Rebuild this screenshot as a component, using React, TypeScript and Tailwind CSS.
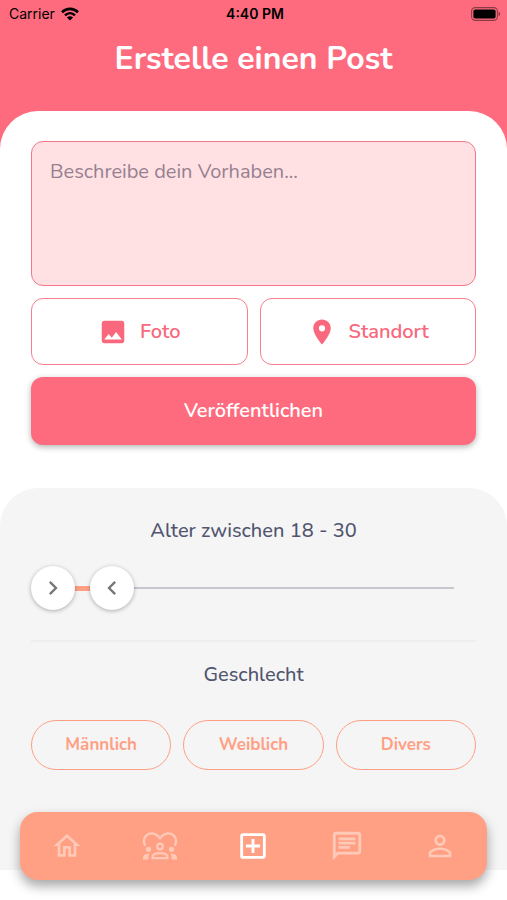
import React, { useState } from 'react';
import {
  MdChevronLeft,
  MdChevronRight,
  MdImage,
  MdOutlineAddBox,
  MdOutlineChat,
  MdOutlineHome,
  MdPersonOutline,
  MdPlace,
} from 'react-icons/md';

const MIN_AGE = 18;
const MAX_AGE = 100;

const genders = ['Männlich', 'Weiblich', 'Divers'];

function WifiIcon() {
  return (
    <svg viewBox="0 0 18 14" className="w-[18px] h-[14px]" aria-hidden="true">
      <g fill="none" stroke="currentColor" strokeWidth="2.6">
        <path d="M1 5.2C5.6.7 12.4.7 17 5.2" />
        <path d="M4 8.4c3-2.9 7-2.9 10 0" />
      </g>
      <path d="M9 13.6 5.9 10.6c1.8-1.7 4.4-1.7 6.2 0z" fill="currentColor" />
    </svg>
  );
}

function BatteryIcon() {
  return (
    <svg viewBox="0 0 30 14" className="w-[30px] h-[14px]" aria-hidden="true">
      <rect x="0.6" y="0.6" width="25.8" height="12.8" rx="3.6" fill="none" stroke="currentColor" strokeOpacity="0.45" strokeWidth="1.1" />
      <rect x="2.4" y="2.5" width="22.2" height="9" rx="1.8" fill="currentColor" />
      <path d="M27.6 4.8c2 .7 2 3.7 0 4.4z" fill="currentColor" fillOpacity="0.5" />
    </svg>
  );
}

function CommunityIcon() {
  return (
    <svg viewBox="0 0 36 30" className="w-9 h-[30px]" aria-hidden="true">
      <g fill="none" stroke="currentColor" strokeWidth="2.3">
        <path d="M3.2 14.8C.8 10.600 1.900 5.600 5.600 3.500 10 1.200 15 2.900 18 7.200c3-4.300 8-6 12.400-3.700 3.700 2.100 4.800 7.100 2.400 11.300" />
        <circle cx="18" cy="15.500" r="2.800" />
        <path d="M10.600 27.200v-1.200c0-2.500 3.600-3.800 7.400-3.800s7.400 1.300 7.400 3.800v1.200z" />
      </g>
      <g fill="currentColor">
        <circle cx="6.400" cy="18.300" r="2.600" />
        <circle cx="29.600" cy="18.300" r="2.600" />
        <path d="M1 28.400v-2c0-2.200 2.600-3.800 6.600-3.600-.8.900-1.200 2-1.200 3.200v2.400z" />
        <path d="M35 28.400v-2c0-2.200-2.600-3.800-6.600-3.600.8.900 1.200 2 1.200 3.200v2.400z" />
      </g>
    </svg>
  );
}

function AgeSlider({ range, onChange }: { range: [number, number]; onChange: (r: [number, number]) => void }) {
  const [from, to] = range;
  const pos = (age: number) => ((age - MIN_AGE) / (MAX_AGE - MIN_AGE)) * 100;
  const input =
    'absolute inset-0 w-full h-11 appearance-none bg-transparent opacity-0 pointer-events-none [&::-webkit-slider-thumb]:pointer-events-auto [&::-webkit-slider-thumb]:appearance-none [&::-webkit-slider-thumb]:size-11';
  const thumb =
    'absolute top-0 size-11 -translate-x-1/2 flex items-center justify-center rounded-full bg-white text-[#77777b] shadow-[0_1px_4px_rgba(0,0,0,0.3)]';

  return (
    <div className="relative h-11">
      {/* Track */}
      <div className="relative mx-[22px] h-11 flex items-center">
        <div className="w-full h-[2px] bg-[#c6c7cf]" />
        <div className="absolute h-[5px] bg-[#ffa085]" style={{ left: `${pos(from)}%`, width: `${pos(to) - pos(from)}%` }} />
        <span className={thumb} style={{ left: `${pos(from)}%` }}>
          <MdChevronRight size={28} />
        </span>
        <span className={thumb} style={{ left: `${pos(to)}%` }}>
          <MdChevronLeft size={28} />
        </span>
      </div>
      <input
        type="range"
        aria-label="Mindestalter"
        min={MIN_AGE}
        max={MAX_AGE}
        value={from}
        onChange={(e) => onChange([Math.min(Number(e.target.value), to), to])}
        className={input}
      />
      <input
        type="range"
        aria-label="Höchstalter"
        min={MIN_AGE}
        max={MAX_AGE}
        value={to}
        onChange={(e) => onChange([from, Math.max(Number(e.target.value), from)])}
        className={input}
      />
    </div>
  );
}

export default function App() {
  const [age, setAge] = useState<[number, number]>([18, 30]);
  const [gender, setGender] = useState<string | null>(null);

  return (
    <div className="min-h-screen flex flex-col bg-[#ff6b7e] font-[Nunito,'Open_Sans',sans-serif]">
      {/* Status bar */}
      <div className="h-7 pl-[9px] pr-1.5 grid grid-cols-3 items-center text-black text-sm font-[Inter,sans-serif]">
        <span className="flex items-center gap-1.5">
          Carrier
          <WifiIcon />
        </span>
        <span className="text-center font-semibold">4:40 PM</span>
        <span className="flex justify-end">
          <BatteryIcon />
        </span>
      </div>

      <header className="h-[83px] pt-2.5">
        <h1 className="text-center text-white text-[32px] leading-[42px] font-bold">Erstelle einen Post</h1>
      </header>

      <main className="flex-1 bg-white rounded-t-[38px]">
        {/* Post form */}
        <form className="px-[31px] pt-[30px] pb-[43px] flex flex-col gap-3" onSubmit={(e) => e.preventDefault()}>
          <textarea
            aria-label="Beschreibung"
            placeholder="Beschreibe dein Vorhaben..."
            className="block w-full h-[145px] px-[18px] py-4 resize-none rounded-xl border border-[#f0788a] bg-[#ffe1e4] text-xl leading-7 text-[#4b4f6b] placeholder:text-[#96808f] outline-none"
          />
          <div className="grid grid-cols-2 gap-3">
            <button type="button" className="h-[67px] flex items-center justify-center gap-3 rounded-xl border border-[#f77f8f] text-[#f9687c] text-xl font-semibold">
              <MdImage size={30} />
              Foto
            </button>
            <button type="button" className="h-[67px] flex items-center justify-center gap-3 rounded-xl border border-[#f77f8f] text-[#f9687c] text-xl font-semibold">
              <MdPlace size={30} />
              Standort
            </button>
          </div>
          <button type="submit" className="h-[68px] rounded-xl bg-[#ff6b7e] text-white text-xl font-semibold shadow-[0_2px_6px_rgba(0,0,0,0.3)]">
            Veröffentlichen
          </button>
        </form>

        {/* Filters */}
        <section className="px-[31px] pt-7 pb-[100px] rounded-t-[38px] bg-[#f5f5f5]">
          <h2 className="text-center text-xl leading-[30px] text-[#51556f] font-medium">
            Alter zwischen {age[0]} - {age[1]}
          </h2>
          <div className="mt-5">
            <AgeSlider range={age} onChange={setAge} />
          </div>
          <hr className="mt-[30px] border-t-2 border-[#eeeeee]" />
          <h2 className="mt-[18px] text-center text-xl leading-[30px] text-[#51556f] font-medium">Geschlecht</h2>
          <div className="mt-[30px] grid grid-cols-3 gap-3">
            {genders.map((name) => (
              <button
                key={name}
                type="button"
                aria-pressed={gender === name}
                onClick={() => setGender(name)}
                className="h-[50px] rounded-full border border-[#ffa085] text-[#ffa085] text-[17px] font-bold"
              >
                {name}
              </button>
            ))}
          </div>
        </section>
      </main>

      {/* Tab bar */}
      <nav className="fixed bottom-5 inset-x-5 h-[68px] grid grid-cols-5 rounded-[18px] bg-[#ffa085] text-[#ffc9b7] shadow-[0_6px_12px_rgba(0,0,0,0.35)]">
        <a href="#home" aria-label="Start" className="flex items-center justify-center">
          <MdOutlineHome size={32} />
        </a>
        <a href="#community" aria-label="Community" className="flex items-center justify-center">
          <CommunityIcon />
        </a>
        <a href="#post" aria-label="Post erstellen" aria-current="page" className="flex items-center justify-center text-white">
          <MdOutlineAddBox size={34} />
        </a>
        <a href="#chat" aria-label="Chat" className="flex items-center justify-center">
          <MdOutlineChat size={34} />
        </a>
        <a href="#profile" aria-label="Profil" className="flex items-center justify-center">
          <MdPersonOutline size={34} />
        </a>
      </nav>
    </div>
  );
}
